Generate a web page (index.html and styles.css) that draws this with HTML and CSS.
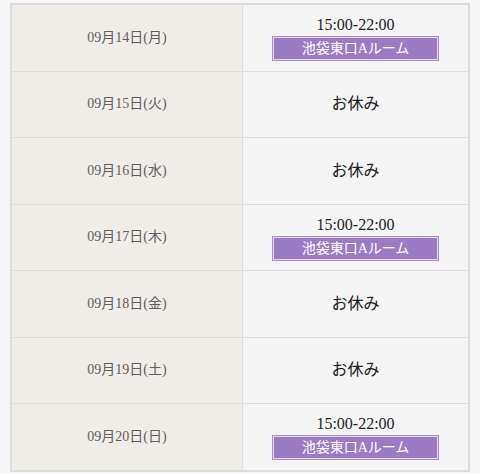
FILE: index.html
```html
<!DOCTYPE html>
<html lang="ja">
<head>
    <meta charset="UTF-8">
    <meta name="viewport" content="width=device-width, initial-scale=1.0">
    <title>出勤スケジュール</title>
    <link rel="stylesheet" href="styles.css">
</head>
<body>

    <table class="schedule">
        <tr>
            <th>09月14日(月)</th>
            <td>
                <div class="time">15:00-22:00</div>
                <div class="room">池袋東口Aルーム</div>
            </td>
        </tr>
        <tr>
            <th>09月15日(火)</th>
            <td><div class="off">お休み</div></td>
        </tr>
        <tr>
            <th>09月16日(水)</th>
            <td><div class="off">お休み</div></td>
        </tr>
        <tr>
            <th>09月17日(木)</th>
            <td>
                <div class="time">15:00-22:00</div>
                <div class="room">池袋東口Aルーム</div>
            </td>
        </tr>
        <tr>
            <th>09月18日(金)</th>
            <td><div class="off">お休み</div></td>
        </tr>
        <tr>
            <th>09月19日(土)</th>
            <td><div class="off">お休み</div></td>
        </tr>
        <tr>
            <th>09月20日(日)</th>
            <td>
                <div class="time">15:00-22:00</div>
                <div class="room">池袋東口Aルーム</div>
            </td>
        </tr>
    </table>

</body>
</html>
```

FILE: styles.css
```css
body {
    font-family: 'Liberation Serif', 'Noto Sans CJK JP', serif;
    background-color: #f6f6f6;
    color: #333;
    margin: 0;
    padding: 3px 10px 0 10px;
}

.schedule {
    width: 460px;
    border-collapse: collapse;
    border: 2px solid #dcdcdc;
    table-layout: fixed;
}

.schedule th,
.schedule td {
    border: 1px solid #dedede;
    height: 65.5px;
    padding: 0;
    text-align: center;
    vertical-align: middle;
}

.schedule th {
    width: 230px;
    background-color: #f0ede9;
    font-weight: normal;
    font-size: 14px;
    line-height: 16px;
    color: #5e5e5e;
}

.schedule td {
    background-color: #f4f4f4;
}

.time {
    font-size: 16px;
    line-height: 20px;
    color: #222;
}

.room {
    width: 163px;
    height: 21px;
    line-height: 21px;
    margin: 2px auto 0 auto;
    background-color: #9b7bc4;
    border: 1px solid #e4d9f0;
    outline: 1px solid #a88dcc;
    color: #fff;
    font-size: 14px;
}

.off {
    font-size: 16px;
    line-height: 20px;
    color: #222;
}
```
